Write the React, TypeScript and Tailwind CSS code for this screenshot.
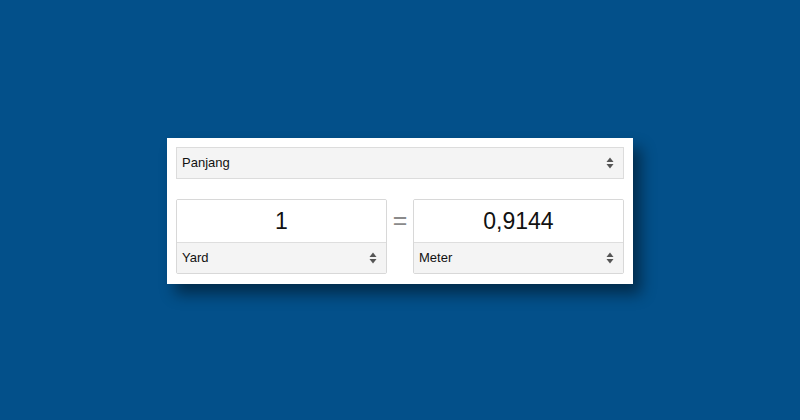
import React from 'react';

const Arrows = () => (
  <svg width="8" height="12" viewBox="0 0 8 12" className="shrink-0">
    <path d="M4 0.5 L7.5 5 L0.5 5 Z" fill="#555" />
    <path d="M4 11.5 L7.5 7 L0.5 7 Z" fill="#555" />
  </svg>
);

const SelectBox = ({ label, className }: { label: string; className: string }) => (
  <div className={`flex items-center justify-between bg-[#f4f4f4] pl-[5px] pr-[9px] text-[13px] text-[#111] ${className}`}>
    <span>{label}</span>
    <Arrows />
  </div>
);

const UnitBox = ({ value, unit }: { value: string; unit: string }) => (
  <div className="w-[211px] border border-[#d8d8d8] rounded-[2px] overflow-hidden">
    <div className="h-[42px] bg-white flex items-center justify-center text-[23px] text-[#111]">{value}</div>
    <SelectBox label={unit} className="h-[31px] border-t border-[#dedede]" />
  </div>
);

const App = () => {
  return (
    <div className="w-[800px] h-[420px] bg-[#03508a] flex items-center justify-center pt-[2px]" style={{ fontFamily: '"Liberation Sans", Arial, sans-serif' }}>
      <div className="w-[466px] bg-white pt-[9px] pb-[10px] px-[9px] shadow-[8px_10px_14px_rgba(0,0,0,0.45)]">
        <SelectBox label="Panjang" className="h-[32px] border border-[#dcdcdc]" />
        <div className="flex items-start justify-between mt-[20px]">
          <UnitBox value="1" unit="Yard" />
          <div className="h-[43px] flex-1 flex items-center justify-center text-[25px] text-[#8a8a8a]">=</div>
          <UnitBox value="0,9144" unit="Meter" />
        </div>
      </div>
    </div>
  );
};

export default App;
